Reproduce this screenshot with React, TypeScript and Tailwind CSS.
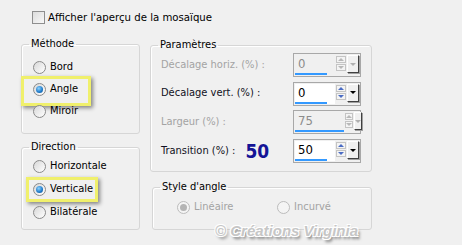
import React from 'react'

function Radio({ checked, disabled }: { checked?: boolean; disabled?: boolean }) {
  return (
    <span
      className={
        'flex items-center justify-center w-[13px] h-[13px] rounded-full border shrink-0 ' +
        (disabled
          ? 'border-[#bcbcbc] bg-[#f4f4f4]'
          : 'border-[#8a8a8a] bg-gradient-to-br from-[#d8d8d8] to-[#ffffff]')
      }
    >
      {checked && (
        <span
          className={
            'w-[7px] h-[7px] rounded-full ' +
            (disabled
              ? 'bg-[#b4b4b4]'
              : 'bg-[radial-gradient(circle_at_40%_35%,#8fd4ff,#1b78c8_60%,#0d4f8f)]')
          }
        />
      )}
    </span>
  )
}

function RadioRow({
  label,
  checked,
  highlight,
  h,
}: {
  label: string
  checked?: boolean
  highlight?: 'angle' | 'verticale'
  h: string
}) {
  return (
    <div className={'relative flex items-center gap-[4px] pl-[11px] ' + h}>
      {highlight === 'angle' && (
        <span className="absolute left-[-1px] top-[-2px] w-[70px] h-[30px] border-[3px] border-[#f0f06c] shadow-[2px_2px_4px_rgba(0,0,0,0.45)]" />
      )}
      {highlight === 'verticale' && (
        <span className="absolute left-[4px] top-[-1px] w-[72px] h-[25px] border-[3px] border-[#f0f06c] shadow-[2px_2px_4px_rgba(0,0,0,0.45)]" />
      )}
      <Radio checked={checked} />
      <span className="text-black">{label}</span>
    </div>
  )
}

function Spin({ value, disabled, bar }: { value: string; disabled?: boolean; bar: number }) {
  return (
    <div className="w-[68px] h-[24px] border border-[#a8a8a8] flex p-[1px] gap-[1px]">
      <div className={'flex-1 flex flex-col ' + (disabled ? 'bg-[#f0f0f0]' : 'bg-white')}>
        <span
          className={
            'flex-1 pl-[3px] leading-[18px] text-[13px] ' + (disabled ? 'text-[#8c8c8c]' : 'text-black')
          }
        >
          {value}
        </span>
        <span className="h-[3px] bg-[#3399ff]" style={{ width: bar }} />
      </div>
      <div className="flex flex-col gap-[1px] pt-[1px] w-[10px]">
        <span className="h-[7px] border border-[#c4c4c4] bg-[#f4f4f4] flex items-center justify-center">
          <span
            className={
              'w-0 h-0 border-l-[3px] border-r-[3px] border-b-[3px] border-l-transparent border-r-transparent ' +
              (disabled ? 'border-b-[#b8b8b8]' : 'border-b-[#4b6cc4]')
            }
          />
        </span>
        <span className="h-[7px] border border-[#c4c4c4] bg-[#f4f4f4] flex items-center justify-center">
          <span
            className={
              'w-0 h-0 border-l-[3px] border-r-[3px] border-t-[3px] border-l-transparent border-r-transparent ' +
              (disabled ? 'border-t-[#b8b8b8]' : 'border-t-[#4b6cc4]')
            }
          />
        </span>
      </div>
      <div className="w-[12px] h-[18px] flex items-center justify-center bg-[#f0f0f0] border border-[#ffffff] border-r-[#404040] border-b-[#404040] shadow-[1px_1px_0_#a0a0a0]">
        <span
          className={
            'w-0 h-0 border-l-[3px] border-r-[3px] border-t-[3px] border-l-transparent border-r-transparent ' +
            (disabled ? 'border-t-[#b0b0b0]' : 'border-t-black')
          }
        />
      </div>
    </div>
  )
}

function ParamRow({
  label,
  disabled,
  children,
}: {
  label: React.ReactNode
  disabled?: boolean
  children: React.ReactNode
}) {
  return (
    <div className="flex items-center h-[24px]">
      <div className={'w-[132px] flex items-center ' + (disabled ? 'text-[#a3a3a3]' : 'text-[#111122]')}>
        {label}
      </div>
      {children}
    </div>
  )
}

export default function App() {
  return (
    <div className="relative w-[462px] h-[245px] overflow-hidden bg-[#f0f0f0] font-['DejaVu_Sans_Condensed','Liberation_Sans',sans-serif] text-[11px] text-black">
      {/* Top checkbox */}
      <div className="flex items-center gap-[3px] pl-[32px] pt-[11px] h-[24px]">
        <span className="w-[13px] h-[13px] border border-[#8e8e8e] bg-gradient-to-br from-[#dcdcdc] to-[#f8f8f8] shrink-0" />
        <span className="leading-[13px] text-[11.3px]">Afficher l'aperçu de la mosaïque</span>
      </div>

      <div className="flex gap-[10px] pl-[21px] pt-[13px]">
        {/* Left column */}
        <div className="w-[119px] flex flex-col gap-[6px]">
          <fieldset className="h-[97px] border border-[#d6d6d6] rounded-[3px] shadow-[inset_1px_1px_0_#ffffff]">
            <legend className="ml-[7px] px-[2px] leading-[14px]">Méthode</legend>
            <div className="pt-[5px] flex flex-col">
              <RadioRow label="Bord" h="h-[22px]" />
              <RadioRow label="Angle" checked highlight="angle" h="h-[22px]" />
              <RadioRow label="Miroir" h="h-[22px]" />
            </div>
          </fieldset>
          <fieldset className="h-[90px] border border-[#d6d6d6] rounded-[3px] shadow-[inset_1px_1px_0_#ffffff]">
            <legend className="ml-[7px] px-[2px] leading-[14px]">Direction</legend>
            <div className="pt-[1px] flex flex-col">
              <RadioRow label="Horizontale" h="h-[23px]" />
              <RadioRow label="Verticale" checked highlight="verticale" h="h-[23px]" />
              <RadioRow label="Bilatérale" h="h-[23px]" />
            </div>
          </fieldset>
        </div>

        {/* Right column */}
        <div className="w-[222px] flex flex-col gap-[8px] pt-[1px]">
          <fieldset className="h-[134px] border border-[#d6d6d6] rounded-[3px] shadow-[inset_1px_1px_0_#ffffff] pl-[10px]">
            <legend className="ml-[-3px] px-[2px] leading-[14px]">Paramètres</legend>
            <div className="pt-[1px] flex flex-col gap-[4.7px]">
              <ParamRow label="Décalage horiz. (%) :" disabled>
                <Spin value="0" disabled bar={32} />
              </ParamRow>
              <ParamRow label="Décalage vert. (%) :">
                <Spin value="0" bar={32} />
              </ParamRow>
              <ParamRow label="Largeur (%) :" disabled>
                <Spin value="75" disabled bar={49} />
              </ParamRow>
              <ParamRow
                label={
                  <>
                    <span>Transition (%) :</span>
                    <span className="ml-[10px] font-bold text-[19px] leading-[20px] text-[#141496]">50</span>
                  </>
                }
              >
                <Spin value="50" bar={32} />
              </ParamRow>
            </div>
          </fieldset>
          <fieldset className="ml-[2px] h-[50px] border border-[#d6d6d6] rounded-[3px] shadow-[inset_1px_1px_0_#ffffff]">
            <legend className="ml-[7px] px-[2px] leading-[14px]">Style d'angle</legend>
            <div className="flex items-center h-[26px] pl-[24px] text-[#a3a3a3]">
              <div className="flex items-center gap-[4px] w-[100px]">
                <Radio checked disabled />
                <span>Linéaire</span>
              </div>
              <div className="flex items-center gap-[4px]">
                <Radio disabled />
                <span>Incurvé</span>
              </div>
            </div>
          </fieldset>
        </div>
      </div>

      {/* Watermark */}
      <span className="absolute left-[215px] top-[222px] font-['Liberation_Sans',sans-serif] font-bold italic text-[15px] leading-[17px] text-[#c6c6c6] [text-shadow:-1px_-1px_0_#fff,1px_-1px_0_#fff,-1px_1px_0_#fff,1px_1px_0_#fff,2px_3px_3px_rgba(0,0,0,0.55)]">
        © Créations Virginia
      </span>
    </div>
  )
}
